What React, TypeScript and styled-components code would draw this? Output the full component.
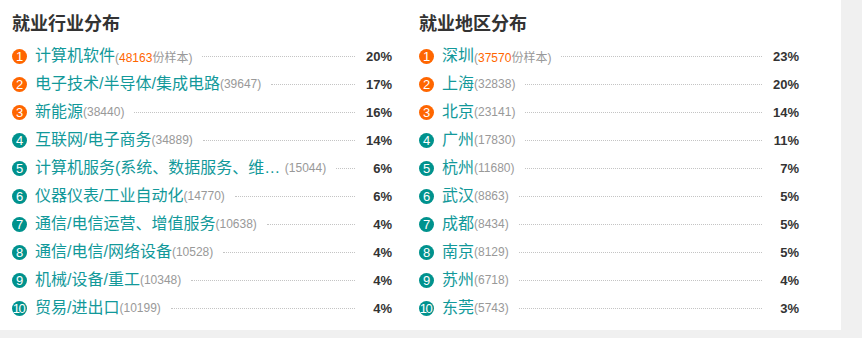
import React from 'react';
import styled, { createGlobalStyle } from 'styled-components';

type Item = { name: string; count: number; percent: string; note?: boolean };

const industries: Item[] = [
  { name: '计算机软件', count: 48163, percent: '20%', note: true },
  { name: '电子技术/半导体/集成电路', count: 39647, percent: '17%' },
  { name: '新能源', count: 38440, percent: '16%' },
  { name: '互联网/电子商务', count: 34889, percent: '14%' },
  { name: '计算机服务(系统、数据服务、维… ', count: 15044, percent: '6%' },
  { name: '仪器仪表/工业自动化', count: 14770, percent: '6%' },
  { name: '通信/电信运营、增值服务', count: 10638, percent: '4%' },
  { name: '通信/电信/网络设备', count: 10528, percent: '4%' },
  { name: '机械/设备/重工', count: 10348, percent: '4%' },
  { name: '贸易/进出口', count: 10199, percent: '4%' },
];

const cities: Item[] = [
  { name: '深圳', count: 37570, percent: '23%', note: true },
  { name: '上海', count: 32838, percent: '20%' },
  { name: '北京', count: 23141, percent: '14%' },
  { name: '广州', count: 17830, percent: '11%' },
  { name: '杭州', count: 11680, percent: '7%' },
  { name: '武汉', count: 8863, percent: '5%' },
  { name: '成都', count: 8434, percent: '5%' },
  { name: '南京', count: 8129, percent: '5%' },
  { name: '苏州', count: 6718, percent: '4%' },
  { name: '东莞', count: 5743, percent: '3%' },
];

const GlobalStyle = createGlobalStyle`
  html, body {
    margin: 0;
    padding: 0;
    background: #f0f0f0;
    font-family: "Liberation Sans", "Noto Sans CJK SC", sans-serif;
  }
`;

const Panel = styled.div`
  width: 841px;
  height: 330px;
  box-sizing: border-box;
  background: #fff;
  padding: 12px 0 0 12px;
  display: grid;
  grid-template-columns: 380px 380px;
  column-gap: 27px;
`;

const Column = styled.section`
  display: flex;
  flex-direction: column;
`;

const Title = styled.h2`
  margin: 0 0 6px;
  font-size: 18px;
  line-height: 24px;
  font-weight: bold;
  color: #333;
`;

const Row = styled.div`
  display: flex;
  align-items: center;
  height: 28px;
`;

const Badge = styled.span<{ $top: boolean; $wide: boolean }>`
  flex: none;
  width: 15px;
  height: 15px;
  border-radius: 50%;
  background: ${({ $top }) => ($top ? '#ff6600' : '#00928d')};
  color: #fff;
  font-size: 13px;
  line-height: 15px;
  text-align: center;
  margin-right: 8px;
  white-space: nowrap;
  letter-spacing: ${({ $wide }) => ($wide ? '-1.5px' : '0')};
  text-indent: ${({ $wide }) => ($wide ? '-2px' : '0')};
`;

const Name = styled.span`
  flex: none;
  font-size: 16px;
  line-height: 28px;
  color: #12999a;
  white-space: pre;
`;

const Count = styled.span`
  flex: none;
  font-size: 12px;
  color: #999;
`;

const Highlight = styled.span`
  color: #ff6600;
`;

const Dots = styled.span`
  flex: 1;
  margin: 1px 10px 0;
  border-top: 1px dotted #c4c4c4;
`;

const Percent = styled.span`
  flex: none;
  width: 27px;
  text-align: right;
  font-size: 13px;
  font-weight: bold;
  color: #333;
`;

const RankList: React.FC<{ title: string; items: Item[] }> = ({ title, items }) => (
  <Column>
    <Title>{title}</Title>
    {items.map((item, i) => (
      <Row key={item.name}>
        <Badge $top={i < 3} $wide={i >= 9}>{i + 1}</Badge>
        <Name>{item.name}</Name>
        <Count>
          (
          {item.note ? (
            <>
              <Highlight>{item.count}</Highlight>份样本
            </>
          ) : (
            item.count
          )}
          )
        </Count>
        <Dots />
        <Percent>{item.percent}</Percent>
      </Row>
    ))}
  </Column>
);

const App: React.FC = () => (
  <>
    <GlobalStyle />
    <Panel>
      <RankList title="就业行业分布" items={industries} />
      <RankList title="就业地区分布" items={cities} />
    </Panel>
  </>
);

export default App;
